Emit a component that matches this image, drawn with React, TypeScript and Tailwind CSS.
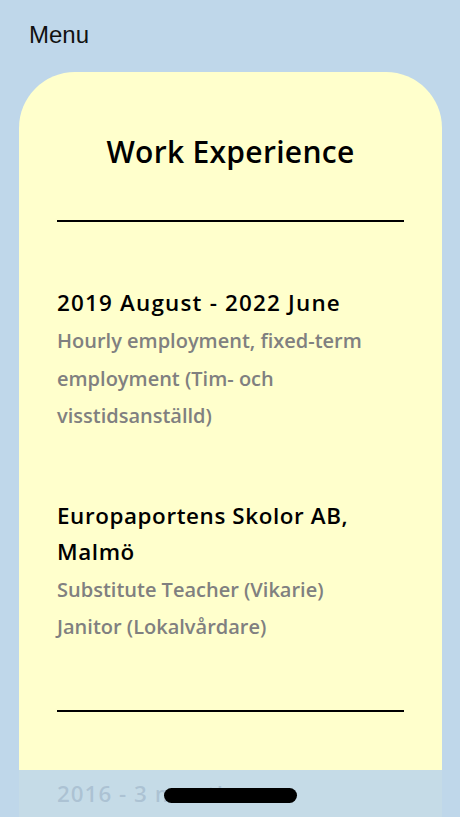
const entries = [
  {
    title: ["2019 August - 2022 June"],
    lines: ["Hourly employment, fixed-term", "employment (Tim- och", "visstidsanställd)"],
    wide: true,
  },
  {
    title: ["Europaportens Skolor AB,", "Malmö"],
    lines: ["Substitute Teacher (Vikarie)", "Janitor (Lokalvårdare)"],
    wide: false,
  },
];

export default function App() {
  return (
    <div
      className="relative h-screen overflow-hidden bg-[#bfd7ea]"
      style={{ fontFamily: "'Open Sans', 'Noto Sans', sans-serif" }}
    >
      <header className="px-[29px] pt-[20px] h-[72px]">
        <span className="text-[24px] leading-[30px] text-[#111] font-['Liberation_Sans',Arial,sans-serif]">
          Menu
        </span>
      </header>

      <main className="ml-[19px] mr-[18px] bg-[#ffffcc] rounded-t-[56px] px-[38px] pt-[60px] pb-[200px]">
        <h1 className="text-center text-[30px] leading-[40px] font-semibold tracking-[0.3px] text-black">
          Work Experience
        </h1>
        <div className="h-[2px] bg-black mt-[48px]" />

        {entries.map((e, i) => (
          <section key={i} className="mt-[63px]">
            {e.title.map((t) => (
              <h2
                key={t}
                className={
                  e.wide
                    ? "text-[22.4px] leading-[36px] font-semibold tracking-[1.2px] text-black"
                    : "text-[22.4px] leading-[36px] font-semibold tracking-[0.6px] text-black"
                }
              >
                {t}
              </h2>
            ))}
            <div className="mt-px">
              {e.lines.map((l) => (
                <p key={l} className="text-[20px] leading-[37.5px] font-semibold text-[#808080]">
                  {l}
                </p>
              ))}
            </div>
          </section>
        ))}

        <div className="h-[2px] bg-black mt-[64px]" />

        <section className="mt-[64px]">
          <h2 className="text-[22.4px] leading-[36px] font-semibold tracking-[1px] text-black">
            2016 - 3 months
          </h2>
        </section>
      </main>

      <div className="absolute bottom-0 left-0 right-0 h-[47px] bg-[#bfd7ea]/90 flex justify-center pt-[18px]">
        <div className="w-[133px] h-[15px] rounded-full bg-black" />
      </div>
    </div>
  );
}
